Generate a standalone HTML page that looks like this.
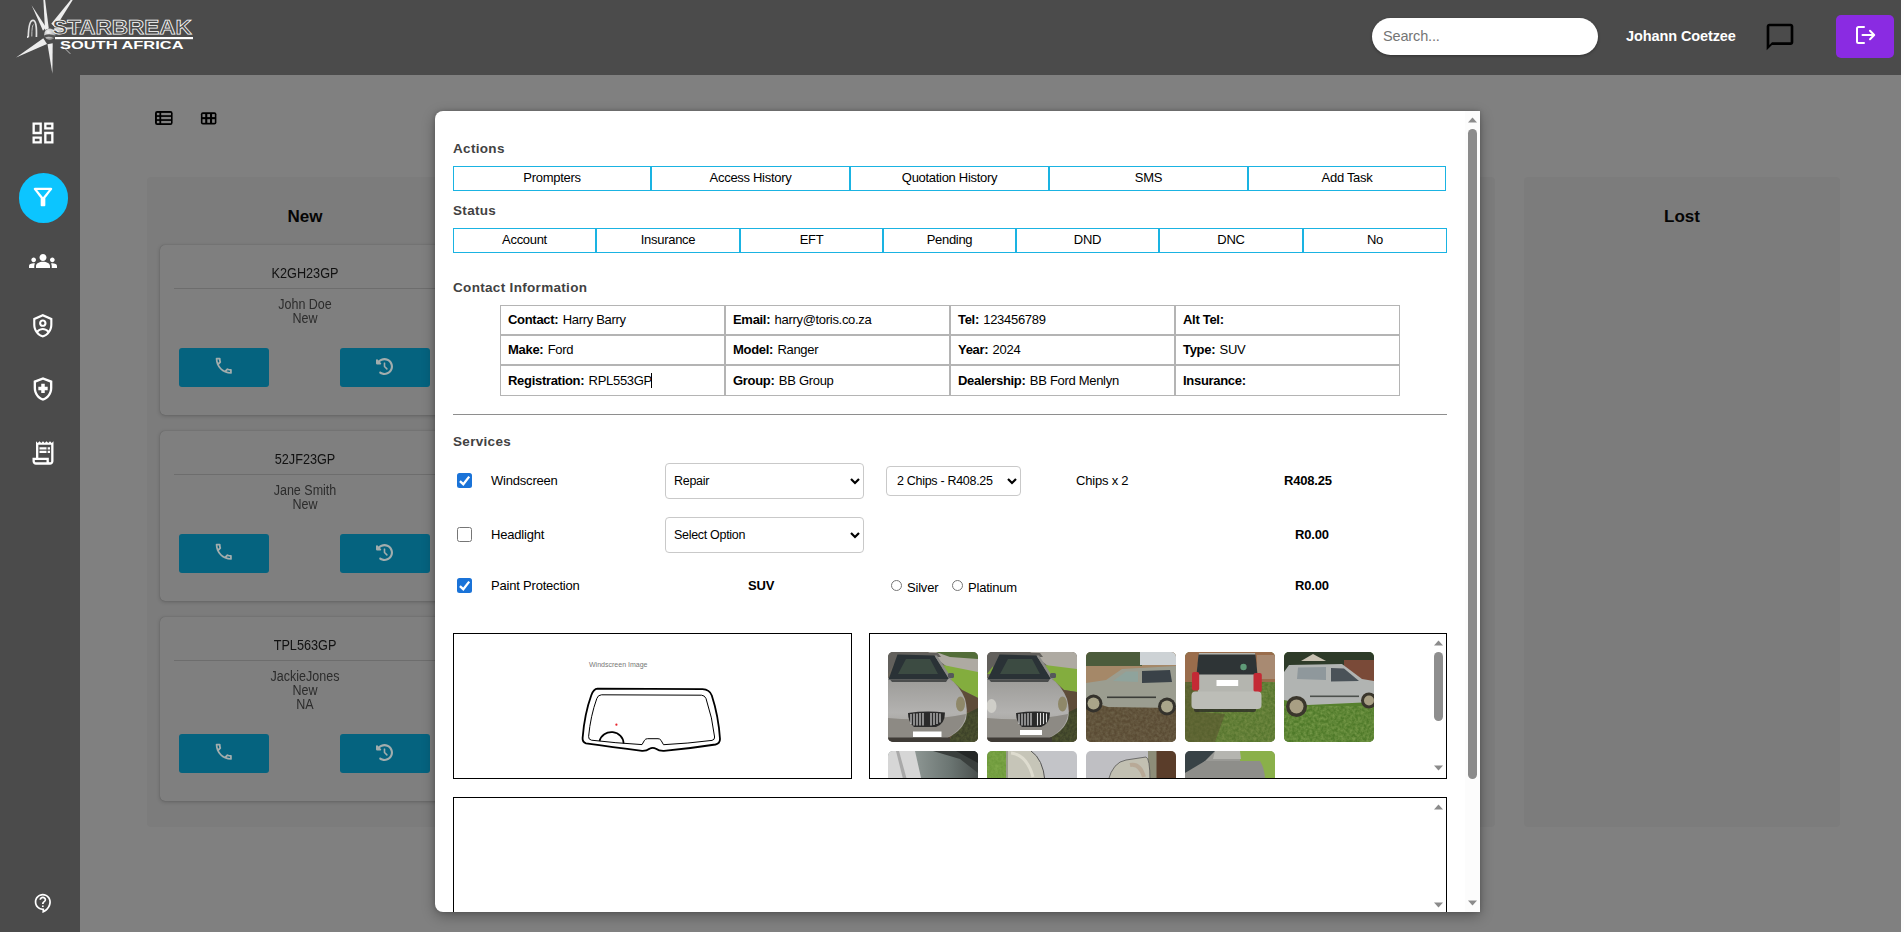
<!DOCTYPE html>
<html>
<head>
<meta charset="utf-8">
<title>Starbreak South Africa</title>
<style>
*{box-sizing:border-box;margin:0;padding:0}
html,body{width:1904px;height:932px;overflow:hidden;background:#fff;font-family:"Liberation Sans",sans-serif;}
.abs{position:absolute}
#page{position:absolute;left:0;top:0;width:1904px;height:932px;overflow:hidden;background:#fdfdfd}
#main{position:absolute;left:80px;top:75px;width:1821px;height:857px;background:#808080;overflow:hidden}
#header{position:absolute;left:0;top:0;width:1901px;height:75px;background:#4b4b4b}
#sidebar{position:absolute;left:0;top:75px;width:80px;height:857px;background:#4b4b4b}
.sico{position:absolute;left:29px;width:28px;height:28px;fill:#fff}
.col{position:absolute;top:102px;width:316px;height:650px;background:#7c7c7c;border-radius:4px}
.coltitle{position:absolute;left:0;width:100%;top:30px;text-align:center;font-weight:bold;font-size:17px;color:#050505;line-height:20px}
.card{position:absolute;left:13px;width:290px;background:#7f7f7f;border-radius:5px;box-shadow:0 1px 4px rgba(0,0,0,.2),0 0 1px rgba(0,0,0,.25)}
.card .reg{position:absolute;left:0;width:100%;top:20px;text-align:center;font-size:14px;line-height:16px;color:#111;transform:scaleX(.905)}
.card .hr{position:absolute;left:14px;right:0;top:43px;height:1px;background:#6d6d6d}
.card .nm{position:absolute;left:0;width:100%;top:53px;text-align:center;font-size:13.8px;line-height:14px;color:#2c2c2c;transform:scaleX(.907)}
.btn{position:absolute;width:90px;height:39px;background:#05637f;border-radius:3px}
.btn svg{position:absolute;left:34.1px;top:7.4px;width:21.5px;height:21.5px;fill:#a3adad}
.btn svg.hi{left:36px;top:9.7px;width:17px;height:17px}

#modal{position:absolute;left:355px;top:36px;width:1045px;height:801px;background:#fff;border-radius:8px 0 0 8px;box-shadow:0 4px 14px rgba(0,0,0,.32),0 0 4px rgba(0,0,0,.18);overflow:hidden;font-size:13px;color:#000}
#modal .h{position:absolute;left:18px;font-weight:bold;font-size:13.5px;letter-spacing:.32px;color:#424242;line-height:16px;white-space:nowrap}
#modal .ab{position:absolute;height:25px;border:1px solid #1ab3e2;text-align:center;font-size:13px;line-height:22px;letter-spacing:-.3px;color:#000;white-space:nowrap}
#modal .tc{position:absolute;width:225px;border:1px solid #b4b4b4;padding-left:7px;font-size:13px;line-height:27px;letter-spacing:-.3px;white-space:nowrap}
#modal .tc b{margin-right:1px}
#modal .t{position:absolute;font-size:13px;line-height:16px;letter-spacing:-.2px;white-space:nowrap}
#modal .sel{position:absolute;border:1px solid #c9c9c9;border-radius:4px;background:#fff;font-size:12.500px;letter-spacing:-.3px;white-space:nowrap}
#modal .cb{position:absolute;left:22px;width:15px;height:15px;border-radius:2.500px}
#modal .cb.on{background:#1a73d8}
#modal .cb.off{border:1.200px solid #767676;background:#fff}
#modal .rd{position:absolute;width:11px;height:11px;border:1px solid #767676;border-radius:50%;background:#fff}
#modal .box{position:absolute;border:1px solid #000;background:#fff;overflow:hidden}
.th{position:absolute;width:90px;height:90px;border-radius:5px;overflow:hidden}
</style>
</head>
<body>
<div id="page">

<!-- MAIN (dimmed) -->
<div id="main">
  <!-- toolbar icons -->
  <svg class="abs" style="left:70px;top:30px" width="80" height="26" viewBox="150 105 80 26">
    <rect x="155" y="111" width="17.600" height="14" rx="2.200" fill="#000"/>
    <g fill="#808080"><rect x="156.900" y="112.900" width="2.500" height="2.300"/><rect x="156.900" y="116.900" width="2.500" height="2.300"/><rect x="156.900" y="120.900" width="2.500" height="2.300"/>
    <rect x="161.200" y="112.900" width="9.800" height="2.300"/><rect x="161.200" y="116.900" width="9.800" height="2.300"/><rect x="161.200" y="120.900" width="9.800" height="2.300"/></g>
    <rect x="200.900" y="112.200" width="15.500" height="12.300" rx="2" fill="#000"/>
    <g fill="#808080"><rect x="202.500" y="114.100" width="2.700" height="3"/><rect x="207.300" y="114.100" width="2.700" height="3"/><rect x="212.100" y="114.100" width="2.700" height="3"/>
    <rect x="202.500" y="119.200" width="2.700" height="3.600"/><rect x="207.300" y="119.200" width="2.700" height="3.600"/><rect x="212.100" y="119.200" width="2.700" height="3.600"/></g>
  </svg>

  <!-- columns -->
  <div class="col" style="left:67px">
    <div class="coltitle">New</div>
    <div class="card" style="top:68px;height:170px">
      <div class="reg">K2GH23GP</div><div class="hr"></div>
      <div class="nm">John Doe<br>New</div>
      <div class="btn" style="left:19px;top:103px"><svg viewBox="0 0 24 24"><path d="M6.540 5c.06.890.210 1.760.450 2.590l-1.200 1.200c-.410-1.200-.670-2.470-.760-3.790h1.510m9.860 12.020c.850.240 1.720.390 2.600.450v1.490c-1.320-.090-2.590-.350-3.800-.750l1.200-1.190M7.500 3H4c-.550 0-1 .450-1 1 0 9.390 7.610 17 17 17 .550 0 1-.450 1-1v-3.490c0-.550-.450-1-1-1-1.240 0-2.450-.2-3.570-.570-.1-.04-.210-.05-.310-.05-.260 0-.510.1-.710.290l-2.200 2.200c-2.830-1.450-5.150-3.760-6.590-6.590l2.200-2.200c.280-.280.360-.670.250-1.020C8.700 6.450 8.500 5.250 8.500 4c0-.550-.450-1-1-1z"/></svg></div>
      <div class="btn" style="left:180px;top:103px"><svg class="hi" viewBox="0 0 512 512"><path d="M75 75L41 41C25.900 25.900 0 36.600 0 57.900V168c0 13.300 10.700 24 24 24H134.100c21.400 0 32.100-25.900 17-41l-30.800-30.800C155 85.500 203 64 256 64c106 0 192 86 192 192s-86 192-192 192c-40.800 0-78.600-12.700-109.700-34.400c-14.500-10.100-34.400-6.600-44.600 7.900s-6.600 34.400 7.900 44.600C151.200 495 201.700 512 256 512c141.400 0 256-114.600 256-256S397.400 0 256 0C185.300 0 121.300 28.700 75 75zm181 53c-13.300 0-24 10.700-24 24V256c0 6.400 2.500 12.500 7 17l72 72c9.400 9.400 24.600 9.400 33.900 0s9.400-24.600 0-33.900l-65-65V152c0-13.300-10.700-24-24-24z"/></svg></div>
    </div>
    <div class="card" style="top:254px;height:170px">
      <div class="reg">52JF23GP</div><div class="hr"></div>
      <div class="nm">Jane Smith<br>New</div>
      <div class="btn" style="left:19px;top:103px"><svg viewBox="0 0 24 24"><path d="M6.540 5c.06.890.210 1.760.450 2.590l-1.200 1.200c-.410-1.200-.670-2.470-.760-3.790h1.510m9.860 12.020c.850.240 1.720.390 2.600.450v1.490c-1.320-.090-2.590-.350-3.800-.750l1.200-1.190M7.500 3H4c-.550 0-1 .450-1 1 0 9.390 7.610 17 17 17 .550 0 1-.450 1-1v-3.490c0-.550-.450-1-1-1-1.240 0-2.450-.2-3.570-.570-.1-.04-.210-.05-.310-.05-.260 0-.510.1-.710.290l-2.200 2.200c-2.830-1.450-5.150-3.760-6.590-6.590l2.200-2.200c.280-.280.360-.670.250-1.020C8.700 6.450 8.500 5.250 8.500 4c0-.550-.450-1-1-1z"/></svg></div>
      <div class="btn" style="left:180px;top:103px"><svg class="hi" viewBox="0 0 512 512"><path d="M75 75L41 41C25.900 25.900 0 36.600 0 57.900V168c0 13.300 10.700 24 24 24H134.100c21.400 0 32.100-25.900 17-41l-30.800-30.800C155 85.500 203 64 256 64c106 0 192 86 192 192s-86 192-192 192c-40.800 0-78.600-12.700-109.700-34.400c-14.500-10.100-34.400-6.600-44.600 7.900s-6.600 34.400 7.900 44.600C151.200 495 201.700 512 256 512c141.400 0 256-114.600 256-256S397.400 0 256 0C185.300 0 121.300 28.700 75 75zm181 53c-13.300 0-24 10.700-24 24V256c0 6.400 2.500 12.500 7 17l72 72c9.400 9.400 24.600 9.400 33.900 0s9.400-24.600 0-33.900l-65-65V152c0-13.300-10.700-24-24-24z"/></svg></div>
    </div>
    <div class="card" style="top:440px;height:184px">
      <div class="reg">TPL563GP</div><div class="hr"></div>
      <div class="nm">JackieJones<br>New<br>NA</div>
      <div class="btn" style="left:19px;top:117px"><svg viewBox="0 0 24 24"><path d="M6.540 5c.06.890.210 1.760.450 2.590l-1.200 1.200c-.410-1.200-.670-2.470-.760-3.790h1.510m9.860 12.020c.850.240 1.720.390 2.600.450v1.490c-1.320-.090-2.590-.350-3.800-.750l1.200-1.190M7.500 3H4c-.550 0-1 .450-1 1 0 9.390 7.610 17 17 17 .550 0 1-.450 1-1v-3.490c0-.550-.450-1-1-1-1.240 0-2.450-.2-3.570-.570-.1-.04-.210-.05-.310-.05-.260 0-.510.1-.710.290l-2.200 2.200c-2.830-1.450-5.150-3.760-6.590-6.590l2.200-2.200c.280-.280.360-.670.250-1.020C8.700 6.450 8.500 5.250 8.500 4c0-.550-.450-1-1-1z"/></svg></div>
      <div class="btn" style="left:180px;top:117px"><svg class="hi" viewBox="0 0 512 512"><path d="M75 75L41 41C25.900 25.900 0 36.600 0 57.900V168c0 13.300 10.700 24 24 24H134.100c21.400 0 32.100-25.900 17-41l-30.800-30.800C155 85.500 203 64 256 64c106 0 192 86 192 192s-86 192-192 192c-40.800 0-78.600-12.700-109.700-34.400c-14.500-10.100-34.400-6.600-44.600 7.900s-6.600 34.400 7.900 44.600C151.200 495 201.700 512 256 512c141.400 0 256-114.600 256-256S397.400 0 256 0C185.300 0 121.300 28.700 75 75zm181 53c-13.300 0-24 10.700-24 24V256c0 6.400 2.500 12.500 7 17l72 72c9.400 9.400 24.600 9.400 33.900 0s9.400-24.600 0-33.900l-65-65V152c0-13.300-10.700-24-24-24z"/></svg></div>
    </div>
  </div>
  <div class="col" style="left:411px"></div>
  <div class="col" style="left:755px"></div>
  <div class="col" style="left:1099px"></div>
  <div class="col" style="left:1444px"><div class="coltitle">Lost</div></div>

  <!-- MODAL -->
  <div id="modal">
    <div class="h" style="top:30px">Actions</div>
    <div class="ab" style="top:55px;left:18px;width:198px">Prompters</div>
    <div class="ab" style="top:55px;left:216px;width:199px">Access History</div>
    <div class="ab" style="top:55px;left:415px;width:199px">Quotation History</div>
    <div class="ab" style="top:55px;left:614px;width:199px">SMS</div>
    <div class="ab" style="top:55px;left:813px;width:198px">Add Task</div>

    <div class="h" style="top:92px">Status</div>
    <div class="ab" style="top:117px;left:18px;width:143px">Account</div>
    <div class="ab" style="top:117px;left:161px;width:144px">Insurance</div>
    <div class="ab" style="top:117px;left:305px;width:143px">EFT</div>
    <div class="ab" style="top:117px;left:448px;width:133px">Pending</div>
    <div class="ab" style="top:117px;left:581px;width:143px">DND</div>
    <div class="ab" style="top:117px;left:724px;width:144px">DNC</div>
    <div class="ab" style="top:117px;left:868px;width:144px">No</div>

    <div class="h" style="top:169px">Contact Information</div>
    <div class="tc" style="left:65px;top:194px;height:30px"><b>Contact:</b> Harry Barry</div>
    <div class="tc" style="left:290px;top:194px;height:30px"><b>Email:</b> harry@toris.co.za</div>
    <div class="tc" style="left:515px;top:194px;height:30px"><b>Tel:</b> 123456789</div>
    <div class="tc" style="left:740px;top:194px;height:30px"><b>Alt Tel:</b></div>
    <div class="tc" style="left:65px;top:224px;height:30px"><b>Make:</b> Ford</div>
    <div class="tc" style="left:290px;top:224px;height:30px"><b>Model:</b> Ranger</div>
    <div class="tc" style="left:515px;top:224px;height:30px"><b>Year:</b> 2024</div>
    <div class="tc" style="left:740px;top:224px;height:30px"><b>Type:</b> SUV</div>
    <div class="tc" style="left:65px;top:254px;height:31px;line-height:29px"><b>Registration:</b> RPL553GP<span style="display:inline-block;width:1px;height:15px;background:#000;vertical-align:-3px;margin-left:-1px"></span></div>
    <div class="tc" style="left:290px;top:254px;height:31px;line-height:29px"><b>Group:</b> BB Group</div>
    <div class="tc" style="left:515px;top:254px;height:31px;line-height:29px"><b>Dealership:</b> BB Ford Menlyn</div>
    <div class="tc" style="left:740px;top:254px;height:31px;line-height:29px"><b>Insurance:</b></div>

    <div class="abs" style="left:18px;top:303px;width:994px;height:1px;background:#8e8e8e"></div>

    <div class="h" style="top:323px">Services</div>

    <!-- row 1 -->
    <div class="cb on" style="top:362px"><svg width="15" height="15" viewBox="0 0 15 15"><path d="M2.900 8.100 L6.300 11.200 L12.200 3.600" fill="none" stroke="#fff" stroke-width="2.300"/></svg></div>
    <div class="t" style="left:56px;top:362px">Windscreen</div>
    <div class="sel" style="left:230px;top:352px;width:199px;height:36px;line-height:34px;padding-left:8px">Repair<svg class="abs" style="right:3px;top:14px" width="10" height="7" viewBox="0 0 10 7"><path d="M1 1l4 4 4-4" fill="none" stroke="#000" stroke-width="2.200"/></svg></div>
    <div class="sel" style="left:451px;top:355px;width:135px;height:30px;line-height:28px;padding-left:10px">2 Chips - R408.25<svg class="abs" style="right:3px;top:11px" width="10" height="7" viewBox="0 0 10 7"><path d="M1 1l4 4 4-4" fill="none" stroke="#000" stroke-width="2.200"/></svg></div>
    <div class="t" style="left:641px;top:362px">Chips x 2</div>
    <div class="t" style="left:849px;top:362px;font-weight:bold">R408.25</div>

    <!-- row 2 -->
    <div class="cb off" style="top:416px"></div>
    <div class="t" style="left:56px;top:416px">Headlight</div>
    <div class="sel" style="left:230px;top:406px;width:199px;height:36px;line-height:34px;padding-left:8px">Select Option<svg class="abs" style="right:3px;top:14px" width="10" height="7" viewBox="0 0 10 7"><path d="M1 1l4 4 4-4" fill="none" stroke="#000" stroke-width="2.200"/></svg></div>
    <div class="t" style="left:860px;top:416px;font-weight:bold">R0.00</div>

    <!-- row 3 -->
    <div class="cb on" style="top:467px"><svg width="15" height="15" viewBox="0 0 15 15"><path d="M2.900 8.100 L6.300 11.200 L12.200 3.600" fill="none" stroke="#fff" stroke-width="2.300"/></svg></div>
    <div class="t" style="left:56px;top:467px">Paint Protection</div>
    <div class="t" style="left:313px;top:467px;font-weight:bold">SUV</div>
    <div class="rd" style="left:456px;top:469px"></div>
    <div class="t" style="left:472px;top:469px">Silver</div>
    <div class="rd" style="left:517px;top:469px"></div>
    <div class="t" style="left:533px;top:469px">Platinum</div>
    <div class="t" style="left:860px;top:467px;font-weight:bold">R0.00</div>

    <!-- windscreen box -->
    <div class="box" style="left:18px;top:522px;width:399px;height:146px" id="wsbox"><svg class="abs" style="left:0;top:0" width="397" height="144" viewBox="454 634 397 144">
      <text x="589" y="667.400" font-family="Liberation Sans, sans-serif" font-size="7.200" fill="#777" textLength="58.500" lengthAdjust="spacingAndGlyphs">Windscreen Image</text>
      <path d="M597.500 688.700 L702.500 689.200 Q709.500 689.500 711.800 695.500 Q718.500 716 720 739 Q720 743.500 715.500 744.500 Q690 748.500 664 750.800 Q659 751 656 748.800 Q652.700 747 649.500 748.800 Q646.500 751 642 750.800 Q612 747 586 743.300 Q582.300 742 582.600 738 Q584.500 714 591.300 695.300 Q593.500 689 597.500 688.700 Z" fill="#fff" stroke="#000" stroke-width="1.800" stroke-linejoin="round"/>
      <path d="M601.500 694.800 L701.500 695.200 Q704.800 695.400 706 698.500 Q712.500 718 714.600 737 Q714.800 739.800 712 740.400 Q688 743.500 663.500 744.700 L661 740.300 Q660 738.700 658 738.700 L647.500 738.700 Q645.500 738.700 644.500 740.300 L642 744.600 Q615 743 591.500 740.200 Q588.300 739.500 588.600 736.500 Q590.500 716 596.800 698.500 Q598 694.900 601.500 694.800 Z" fill="none" stroke="#000" stroke-width="1"/>
      <path d="M599.500 741 A12.200 11.500 0 0 1 623.600 743.500" fill="none" stroke="#000" stroke-width="1.700"/>
      <circle cx="616.400" cy="724.700" r="1.100" fill="#e8242c"/>
    </svg></div>
    <!-- photos box -->
    <div class="box" style="left:434px;top:522px;width:578px;height:146px" id="phbox"><svg width="0" height="0" style="position:absolute"><defs>
<filter id="nz" x="0" y="0" width="100%" height="100%"><feTurbulence type="fractalNoise" baseFrequency="0.350" numOctaves="2" seed="3"/><feColorMatrix type="matrix" values="0 0 0 0 0  0 0 0 0 0  0 0 0 0 0  0 0 0 -1.300 0.950"/><feComposite in="SourceGraphic" operator="in"/></filter>
<linearGradient id="hood" x1="0" y1="0" x2="0" y2="1"><stop offset="0" stop-color="#9c9b98"/><stop offset=".55" stop-color="#b3b2b0"/><stop offset="1" stop-color="#99968f"/></linearGradient>
</defs></svg><svg class="th" style="left:18px;top:18px" width="90" height="90" viewBox="0 0 90 90"><rect width="90" height="90" fill="#6b665c"/>
<polygon points="40,0 90,0 90,24 58,14" fill="#aeaaa2"/>
<polygon points="48,0 90,0 90,7 62,5" fill="#536d39"/>
<polygon points="55,13 90,20 90,46 74,38 62,27" fill="#83ad3e"/>
<polygon points="62,27 74,38 90,46 90,90 55,90" fill="#5e4c39"/>
<polygon points="78,62 90,56 90,90 60,90" fill="#3d4229"/>
<rect x="55" y="60" width="35" height="30" fill="#8a9450" filter="url(#nz)" opacity=".35"/>
<path d="M0 26 L61 26 Q72 34 77 47 Q80 58 78 67 Q73 81 56 87 L0 89 Z" fill="url(#hood)"/>
<path d="M0 66 Q40 70 78 62 Q76 78 56 87 L0 89 Z" fill="#8d8a84"/>
<polygon points="0,0 12,0 50,1 53,5 10,5 0,22" fill="#62605c"/>
<polygon points="9.5,2.5 46.5,3.500 61,27 0.500,27.500" fill="#2a3236"/>
<polygon points="46.5,3.500 49,3.500 64,27 61,27" fill="#8b8b88"/>
<polygon points="18,7 42,7 50,22 10,22" fill="#3c4b42"/>
<rect x="60" y="21" width="6" height="5" rx="1.500" fill="#55585a"/>
<path d="M2 27.500 L60 27 L58 30 L4 30Z" fill="#4a4c4c"/>
<ellipse cx="72.5" cy="52" rx="4.500" ry="7.500" fill="#8f8869"/>

<path d="M20 61 Q38 58.500 57 60.500 Q57 72 48 75 L26 75 Q20 70 20 61Z" fill="#2a2a2a"/>
<path d="M23 62v10M26 61.500v12M29 61.500v12M32 61v12.500M35 61v12.500M43.0 61v12.500M46.0 61v12M49.0 61v11M52.0 61.500v9" stroke="#dcdcdc" stroke-width="1.100"/>
<rect x="0" y="85.500" width="62" height="4.500" fill="#3f3b36"/>
<rect x="25" y="79.500" width="28.500" height="5.500" fill="#fff"/></svg>
<svg class="th" style="left:117px;top:18px" width="90" height="90" viewBox="0 0 90 90"><rect width="90" height="90" fill="#6b665c"/>
<polygon points="43,0 90,0 90,24 61,14" fill="#aeaaa2"/>
<rect x="0" y="9" width="6" height="13" fill="#7da53b"/>
<polygon points="58,13 90,17 90,40 77,38 65,27" fill="#83ad3e"/>
<polygon points="65,27 77,38 90,40 90,90 55,90" fill="#5e4c39"/>
<polygon points="78,62 90,56 90,90 60,90" fill="#3d4229"/>
<rect x="55" y="60" width="35" height="30" fill="#8a9450" filter="url(#nz)" opacity=".35"/>
<path d="M0 26 L64 26 Q75 34 80 47 Q83 58 81 67 Q76 81 59 87 L0 89 Z" fill="url(#hood)"/>
<path d="M0 66 Q43 70 81 62 Q79 78 59 87 L0 89 Z" fill="#8d8a84"/>
<polygon points="0,0 15,0 53,1 56,5 13,5 0,22" fill="#62605c"/>
<polygon points="12.5,2.5 49.5,3.500 64,27 0.500,27.500" fill="#2a3236"/>
<polygon points="49.5,3.500 52,3.500 67,27 64,27" fill="#8b8b88"/>
<polygon points="21,7 45,7 53,22 13,22" fill="#3c4b42"/>
<rect x="63" y="21" width="6" height="5" rx="1.500" fill="#55585a"/>
<path d="M2 27.500 L63 27 L61 30 L4 30Z" fill="#4a4c4c"/>
<ellipse cx="75.5" cy="52" rx="4.500" ry="7.500" fill="#8f8869"/>
<ellipse cx="4.500" cy="54" rx="5" ry="7" fill="#cfcec8"/>
<path d="M29 61 Q47 58.500 63 60.500 Q63 72 54 75 L35 75 Q29 70 29 61Z" fill="#2a2a2a"/>
<path d="M32 62v10M35 61.500v12M38 61.500v12M41 61v12.500M44 61v12.500M50.5 61v12.500M53.5 61v12M56.5 61v11M59.5 61.500v9" stroke="#dcdcdc" stroke-width="1.100"/>
<rect x="0" y="85.500" width="65" height="4.500" fill="#3f3b36"/>
<rect x="33" y="78" width="22" height="5" fill="#fff"/></svg>
<svg class="th" style="left:216px;top:18px" width="90" height="90" viewBox="0 0 90 90"><rect width="90" height="90" fill="#5a4b34"/>
<rect x="0" y="0" width="90" height="32" fill="#a58868"/>
<rect x="0" y="0" width="56" height="14" fill="#4c5c3c"/><rect x="54" y="0" width="36" height="13" fill="#cdd2d5"/>
<rect x="0" y="52" width="90" height="38" fill="#5a4b34"/>
<rect x="0" y="52" width="90" height="38" fill="#8a8468" filter="url(#nz)" opacity=".55"/>
<polygon points="0,31 20,28 36,17 90,14 90,56 22,55 0,48" fill="#9b9d90"/>
<polygon points="27,29 40,19.500 52,19.500 52,30" fill="#8fa39c"/>
<polygon points="56,19 84,18 86,30 56,31" fill="#3a4248"/>
<rect x="21" y="44.500" width="49" height="1.600" fill="#3b3d38"/>
<circle cx="7.500" cy="51.500" r="9" fill="#34322c"/><circle cx="7.500" cy="51.500" r="6" fill="#a9a58a"/>
<circle cx="81" cy="54.500" r="9" fill="#34322c"/><circle cx="81" cy="54.500" r="6" fill="#a9a58a"/></svg>
<svg class="th" style="left:315px;top:18px" width="90" height="90" viewBox="0 0 90 90"><rect width="90" height="90" fill="#5f7a35"/>
<rect x="0" y="0" width="90" height="32" fill="#9a6d4c"/><rect x="72" y="3" width="18" height="24" fill="#a88a72"/>
<rect x="0" y="30" width="90" height="60" fill="#57762f"/>
<rect x="0" y="30" width="90" height="60" fill="#9aa860" filter="url(#nz)" opacity=".6"/>
<polygon points="0,30 12,30 14,60 40,62 30,90 0,90" fill="#5a5030" opacity=".55"/>
<rect x="9" y="54" width="62" height="6" rx="2" fill="#2e2e28" opacity=".8"/>
<polygon points="14,1 70,1 72,22 71,41 13,41 12,22" fill="#b4b5af"/>
<polygon points="13.500,2.500 70.500,2.500 72.500,22.500 11.500,22.500" fill="#2e3436"/>
<circle cx="58.500" cy="15" r="3.200" fill="#5f9a78"/>
<rect x="7" y="20" width="7.200" height="18.500" rx="2" fill="#c42a35"/>
<rect x="68.500" y="21" width="8.300" height="19" rx="2" fill="#c42a35"/>
<rect x="6.500" y="39.500" width="70" height="17.500" rx="4" fill="#bcbdb7"/>
<rect x="31.500" y="28" width="21.700" height="6" fill="#fff"/></svg>
<svg class="th" style="left:414px;top:18px" width="90" height="90" viewBox="0 0 90 90"><rect width="90" height="90" fill="#56802e"/>
<rect x="0" y="0" width="90" height="30" fill="#2e3b29"/>
<polygon points="17,9 29,2 42,9" fill="#c9c2b2"/>
<rect x="60" y="8" width="30" height="22" fill="#7a4a38"/>
<rect x="0" y="54" width="90" height="36" fill="#4f7a2a"/>
<rect x="0" y="54" width="90" height="36" fill="#a8c070" filter="url(#nz)" opacity=".6"/>
<polygon points="0,20 5,13 58,12 78,27 90,29 90,50 24,53 0,48" fill="#b1b4b2"/>
<polygon points="14,15.500 42,15 42,28 13,27" fill="#8f989c"/>
<polygon points="47,16 60,16.500 75,29 47,29.500" fill="#4a5258"/>
<rect x="26" y="43.500" width="49" height="1.600" fill="#4c504c"/>
<circle cx="12.500" cy="54.500" r="10.500" fill="#3a362c"/><circle cx="12.500" cy="54.500" r="7" fill="#a89f84"/>
<circle cx="85" cy="48.500" r="8" fill="#3a362c"/><circle cx="85" cy="48.500" r="5" fill="#a89f84"/></svg>
<svg class="th" style="left:18px;top:117px" width="90" height="90" viewBox="0 0 90 90"><defs><linearGradient id="r1g" x1="0" y1="0" x2="1" y2="0"><stop offset=".3" stop-color="#8d9693"/><stop offset=".7" stop-color="#6a7471"/><stop offset="1" stop-color="#4a504e"/></linearGradient></defs>
<rect width="90" height="90" fill="url(#r1g)"/><polygon points="0,0 27,0 36,40 0,40" fill="#d6d6d6"/><polygon points="8,0 11,0 22,40 18,40" fill="#a9a9a9"/><polygon points="45,0 90,0 90,22 72,8" fill="#3a3f3d"/><polygon points="68,0 90,0 90,12" fill="#252827"/></svg>
<svg class="th" style="left:117px;top:117px" width="90" height="90" viewBox="0 0 90 90"><rect width="90" height="90" fill="#c3c4c8"/><rect x="0" y="0" width="19" height="40" fill="#6e9a3c"/><rect x="0" y="0" width="19" height="40" fill="#9cc060" filter="url(#nz)" opacity=".5"/><path d="M19 0 L44 0 Q56 8 58 30 L19 30Z" fill="#c6c5b8"/><path d="M24 2 Q40 4 46 26" fill="none" stroke="#dedccf" stroke-width="3"/><path d="M44 0 Q56 8 58 30" fill="none" stroke="#555" stroke-width="1"/><rect x="19" y="0" width="2" height="30" fill="#9a9c8c"/></svg>
<svg class="th" style="left:216px;top:117px" width="90" height="90" viewBox="0 0 90 90"><rect width="90" height="90" fill="#bfbfc3"/><rect x="70" y="0" width="20" height="40" fill="#5a3d2a"/><rect x="62" y="0" width="8.500" height="40" fill="#8d8d78"/><path d="M22 30 Q27 11 40 9 L60 6 Q64 7 64 30Z" fill="#c2c0b2" stroke="#555" stroke-width=".8"/><path d="M44 14 Q54 12 58 26" fill="none" stroke="#b09a86" stroke-width="4" opacity=".6"/></svg>
<svg class="th" style="left:315px;top:117px" width="90" height="90" viewBox="0 0 90 90"><rect width="90" height="90" fill="#9a9a96"/><rect x="55" y="0" width="35" height="30" fill="#8ab04a"/><polygon points="0,0 30,0 10,20 0,22" fill="#384246"/><path d="M0 22 L20 10 L75 10 Q80 18 80 30 L0 30Z" fill="#8e8e8a"/><polygon points="30,0 55,0 56,8 28,8" fill="#b5b5b0"/></svg>
<div class="abs" style="left:561px;top:0;width:15px;height:144px;background:#fff"></div>
<div class="abs" style="left:564px;top:18px;width:9px;height:69px;border-radius:4.500px;background:#8e8e8e"></div>
<svg class="abs" style="left:564px;top:6px" width="9" height="6" viewBox="0 0 9 6"><path d="M0 5.500L4.500 0.500 9 5.500z" fill="#8b8b8b"/></svg>
<svg class="abs" style="left:564px;top:131px" width="9" height="6" viewBox="0 0 9 6"><path d="M0 0.500L4.500 5.500 9 0.500z" fill="#8b8b8b"/></svg></div>
    <!-- notes box -->
    <div class="box" style="left:18px;top:686px;width:994px;height:120px" id="ntbox"><svg class="abs" style="left:980px;top:6px" width="9" height="6" viewBox="0 0 9 6"><path d="M0 5.500L4.500 0.500 9 5.500z" fill="#8b8b8b"/></svg>
<svg class="abs" style="left:980px;top:104px" width="9" height="6" viewBox="0 0 9 6"><path d="M0 0.500L4.500 5.500 9 0.500z" fill="#8b8b8b"/></svg></div>

    <!-- modal scrollbar -->
    <div class="abs" style="left:1030px;top:0;width:15px;height:801px;background:#fcfcfc"></div>
    <div class="abs" style="left:1033px;top:18px;width:9px;height:650px;border-radius:4.500px;background:#8b8b8b"></div>
    <svg class="abs" style="left:1033px;top:6px" width="9" height="6" viewBox="0 0 9 6"><path d="M0 5.500L4.500 0.500 9 5.500z" fill="#8b8b8b"/></svg>
    <svg class="abs" style="left:1033px;top:789px" width="9" height="6" viewBox="0 0 9 6"><path d="M0 0.500L4.500 5.500 9 0.500z" fill="#8b8b8b"/></svg>
  </div>
</div>

<!-- HEADER -->
<div id="header">
  <!-- logo -->
  <svg class="abs" style="left:0;top:0" width="210" height="75" viewBox="0 0 210 75">
    <defs><radialGradient id="sph" cx=".35" cy=".3" r=".8"><stop offset="0" stop-color="#f4f4f4"/><stop offset=".6" stop-color="#bdbdbd"/><stop offset="1" stop-color="#6a6a6a"/></radialGradient></defs>
    <g fill="#ededed">
      <polygon points="43.400,0 45.100,0 48.800,28.500 45,30"/>
      <polygon points="70.600,0 72.700,0 55.500,27.500 51.300,23.800"/>
      <polygon points="31.600,5.300 46,27.200 43,30.800"/>
      <polygon points="16.100,57.500 43.300,38.200 47,44"/>
      <polygon points="52.400,73.800 47.500,44.300 52.700,43.300"/>
      <polygon points="54,27.800 82,27.100 55,31.800" opacity=".8"/>
    </g>
    <path d="M65.400 48.900L70.300 53.800" stroke="#ddd" stroke-width=".8"/>
    <circle cx="49.900" cy="34.300" r="5.700" fill="url(#sph)"/>
    <path d="M44.300 35.200 Q50 33 55.500 35.800 Q55.300 37.800 54.300 38.300 Q50 36 44.900 37.300Z" fill="#555"/>
    <path d="M28.300 37.300 Q28.600 20.300 33 20.300 Q37 20.300 36.400 37" fill="none" stroke="#e2e2e2" stroke-width="1.700"/>
    <path d="M31.800 36.500 Q31.800 25 33.600 24.500" fill="none" stroke="#cfcfcf" stroke-width=".9"/>
    <rect x="27" y="36" width="1.200" height="2" fill="#ddd"/>
    <text x="52.300" y="34.400" font-family="Liberation Sans, sans-serif" font-size="20.500" font-weight="bold" fill="#4b4b4b" stroke="#fff" stroke-width="0.750" textLength="139.500" lengthAdjust="spacingAndGlyphs">STARBREAK</text>
    <rect x="55" y="37" width="138" height="2.200" fill="#fff"/>
    <text x="60" y="48.600" font-family="Liberation Sans, sans-serif" font-size="10" font-weight="bold" fill="#fff" textLength="123.500" lengthAdjust="spacingAndGlyphs">SOUTH AFRICA</text>
  </svg>
  <!-- search -->
  <div class="abs" style="left:1372px;top:17.5px;width:226px;height:37px;border-radius:19px;background:#fff;box-shadow:0 1px 3px rgba(0,0,0,.35)"></div>
  <div class="abs" style="left:1383px;top:27px;font-size:14.5px;letter-spacing:-.15px;line-height:18px;color:#757575">Search...</div>
  <div class="abs" style="left:1626px;top:27px;font-size:14.5px;letter-spacing:-.1px;line-height:18px;color:#fff;font-weight:bold;white-space:nowrap">Johann Coetzee</div>
  <!-- chat -->
  <svg class="abs" style="left:1763.7px;top:21px" width="32" height="32" viewBox="0 0 24 24" fill="#000"><path d="M20 2H4c-1.100 0-2 .9-2 2v18l4-4h14c1.100 0 2-.9 2-2V4c0-1.100-.9-2-2-2zm0 14H6l-2 2V4h16v12z"/></svg>
  <!-- logout -->
  <div class="abs" style="left:1836px;top:15px;width:58px;height:43px;border-radius:5px;background:#8a2be2"></div>
  <svg class="abs" style="left:1853px;top:23px" width="24" height="24" viewBox="0 0 24 24" fill="none" stroke="#fff" stroke-width="2" stroke-linecap="round" stroke-linejoin="round"><path d="M11 4H5.500a1.500 1.500 0 0 0-1.500 1.500v13A1.500 1.500 0 0 0 5.500 20H11"/><path d="M9.500 12H21M17 7.800L21.200 12 17 16.200"/></svg>
</div>

<!-- SIDEBAR -->
<div id="sidebar">
  <!-- dashboard outlined -->
  <svg class="sico" style="top:44px" viewBox="0 0 24 24"><path d="M19 5v2h-4V5h4M9 5v6H5V5h4m10 8v6h-4v-6h4M9 17v2H5v-2h4M21 3h-8v6h8V3zM11 3H3v10h8V3zm10 8h-8v10h8V11zm-10 4H3v6h8v-6z"/></svg>
  <!-- active circle + filter -->
  <div class="abs" style="left:18.8px;top:98px;width:49.5px;height:49.5px;border-radius:50%;background:#0cc5ff"></div>
  <svg class="sico" style="top:108px" viewBox="0 0 24 24"><path d="M7 6h10l-5.010 6.300L7 6zm-2.750-.390C6.270 8.200 10 13 10 13v6c0 .550.450 1 1 1h2c.550 0 1-.450 1-1v-6s3.720-4.800 5.740-7.390c.510-.660.040-1.610-.790-1.610H5.040c-.830 0-1.300.950-.790 1.610z"/></svg>
  <!-- groups -->
  <svg class="sico" style="top:172px" viewBox="0 0 24 24"><path d="M12 12.750c1.630 0 3.070.390 4.240.9 1.080.480 1.760 1.560 1.760 2.730V18H6v-1.610c0-1.180.680-2.260 1.760-2.730 1.170-.520 2.610-.910 4.240-.910zM4 13c1.100 0 2-.9 2-2s-.9-2-2-2-2 .9-2 2 .9 2 2 2zm1.130 1.100c-.370-.060-.740-.1-1.130-.1-.990 0-1.930.210-2.780.580C.480 14.900 0 15.620 0 16.430V18h4.500v-1.610c0-.830.230-1.610.630-2.290zM20 13c1.100 0 2-.9 2-2s-.9-2-2-2-2 .9-2 2 .9 2 2 2zm4 3.430c0-.810-.480-1.530-1.220-1.850-.850-.370-1.790-.580-2.780-.580-.390 0-.760.040-1.130.1.400.680.630 1.460.630 2.290V18H24v-1.570zM12 6c1.660 0 3 1.340 3 3s-1.340 3-3 3-3-1.340-3-3 1.340-3 3-3z"/></svg>
  <!-- shield person -->
  <svg class="sico" style="top:237.5px;left:30.2px;width:25.6px;height:25.6px" viewBox="0 0 24 24"><path d="M12 1L3 5v6c0 5.550 3.840 10.740 9 12 5.160-1.260 9-6.450 9-12V5l-9-4zm0 2.190l7 3.110V11c0 1.930-.560 3.800-1.500 5.440C16.300 14.900 13.600 14 12 14s-4.300.9-5.500 2.440C5.560 14.800 5 12.930 5 11V6.300l7-3.110zM12 16c1.300 0 3.200.740 4.250 1.960-1.100 1.350-2.570 2.400-4.250 2.960-1.680-.560-3.150-1.610-4.250-2.960C8.800 16.740 10.700 16 12 16zm0-10c-1.940 0-3.500 1.560-3.500 3.500S10.060 13 12 13s3.500-1.560 3.500-3.500S13.940 6 12 6zm0 2c.830 0 1.500.670 1.500 1.500S12.830 11 12 11s-1.500-.670-1.500-1.500S11.170 8 12 8z"/></svg>
  <!-- health and safety -->
  <svg class="sico" style="top:300px" viewBox="0 0 24 24"><path d="M10.500 13H8v-3h2.500V7.500h3V10H16v3h-2.500v2.500h-3V13zM12 2L4 5v6.090c0 5.050 3.410 9.760 8 10.910 4.590-1.150 8-5.860 8-10.910V5l-8-3zm6 9.090c0 4-2.550 7.700-6 8.830-3.450-1.130-6-4.820-6-8.830v-4.700l6-2.250 6 2.250v4.700z"/></svg>
  <!-- receipt long -->
  <svg class="sico" style="top:364px" viewBox="0 0 24 24"><path d="M19.500 3.500L18 2l-1.500 1.500L15 2l-1.500 1.500L12 2l-1.500 1.500L9 2 7.500 3.500 6 2v14H3v3c0 1.660 1.340 3 3 3h12c1.660 0 3-1.340 3-3V2l-1.500 1.500zM15 20H6c-.550 0-1-.450-1-1v-1h10v2zm4-1c0 .550-.450 1-1 1s-1-.450-1-1v-3H8V5h11v14z"/><path d="M9 7h6v2H9zM16 7h2v2h-2zM9 10h6v2H9zM16 10h2v2h-2z"/></svg>
  <!-- contact support -->
  <svg class="abs" style="left:33px;top:817.6px;width:20.5px;height:20.5px;fill:#fff" viewBox="0 0 24 24"><path d="M11 23.590v-3.600c-5.010-.260-9-4.420-9-9.490C2 5.260 6.260 1 11.500 1S21 5.260 21 10.500c0 4.950-3.440 9.930-8.570 12.400l-1.430.690zM11.500 3C7.360 3 4 6.360 4 10.500S7.360 18 11.500 18H13v2.300c3.640-2.300 6-6.080 6-9.800C19 6.360 15.640 3 11.500 3zm-1 11.500h2v2h-2zm2-1.500h-2c0-3.250 3-3 3-5 0-1.100-.9-2-2-2s-2 .9-2 2h-2c0-2.210 1.790-4 4-4s4 1.790 4 4c0 2.500-3 2.750-3 5z"/></svg>
</div>

</div>
</body>
</html>
